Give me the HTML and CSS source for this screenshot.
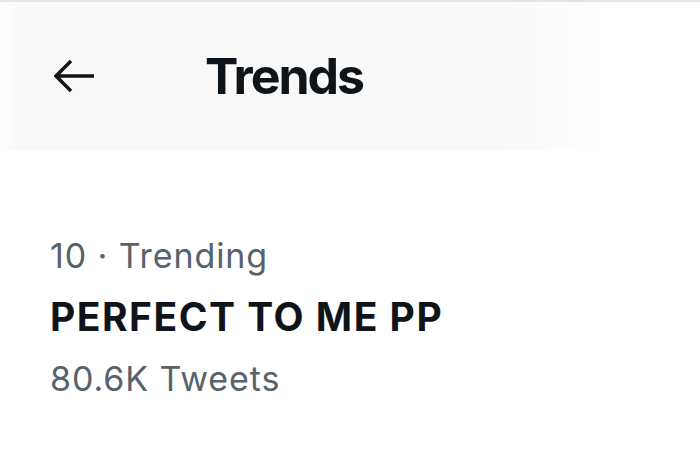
FILE: index.html
```html
<!DOCTYPE html>
<html lang="en">
<head>
<meta charset="utf-8">
<title>Trends</title>
<link rel="stylesheet" href="styles.css">
</head>
<body>
<div class="page">
  <header class="topbar">
    <svg class="back" width="40" height="34" viewBox="0 0 40 34" aria-hidden="true">
      <path d="M17 2 L2 17 L17 32 M2 17 H40" fill="none" stroke="#0f1419" stroke-width="3.4" stroke-linejoin="miter"/>
    </svg>
    <h1 class="title">Trends</h1>
  </header>
  <main class="list">
    <article class="trend">
      <div class="meta">10 · Trending</div>
      <div class="name">PERFECT TO ME PP</div>
      <div class="count">80.6K Tweets</div>
    </article>
  </main>
</div>
</body>
</html>
```
FILE: styles.css
```css
html, body {
  margin: 0;
  padding: 0;
  background: #ffffff;
}
body {
  width: 700px;
  height: 469px;
  overflow: hidden;
  font-family: Inter, "Liberation Sans", sans-serif;
  color: #0f1419;
}
.page {
  border-top: 2px solid #e4e4e4;
}
.topbar {
  height: 148px;
  display: flex;
  align-items: center;
  padding-left: 54px;
  background: linear-gradient(90deg, #ffffff 0px, #f9f9fa 20px, #f9f9fa 500px, #ffffff 610px);
}
.back {
  display: block;
  flex: none;
}
.title {
  margin: 0 0 0 111px;
  font-size: 50px;
  line-height: 60px;
  font-weight: 700;
  letter-spacing: -2px;
  color: #0f1419;
}
.list {
  padding: 85px 0 0 50px;
}
.meta, .count {
  font-size: 34px;
  line-height: 41px;
  letter-spacing: 0.9px;
  color: #56626d;
}
.name {
  margin-top: 17px;
  font-size: 39px;
  line-height: 47px;
  font-weight: 700;
  letter-spacing: 1.5px;
  color: #0f1419;
}
.count {
  margin-top: 18px;
}
```
